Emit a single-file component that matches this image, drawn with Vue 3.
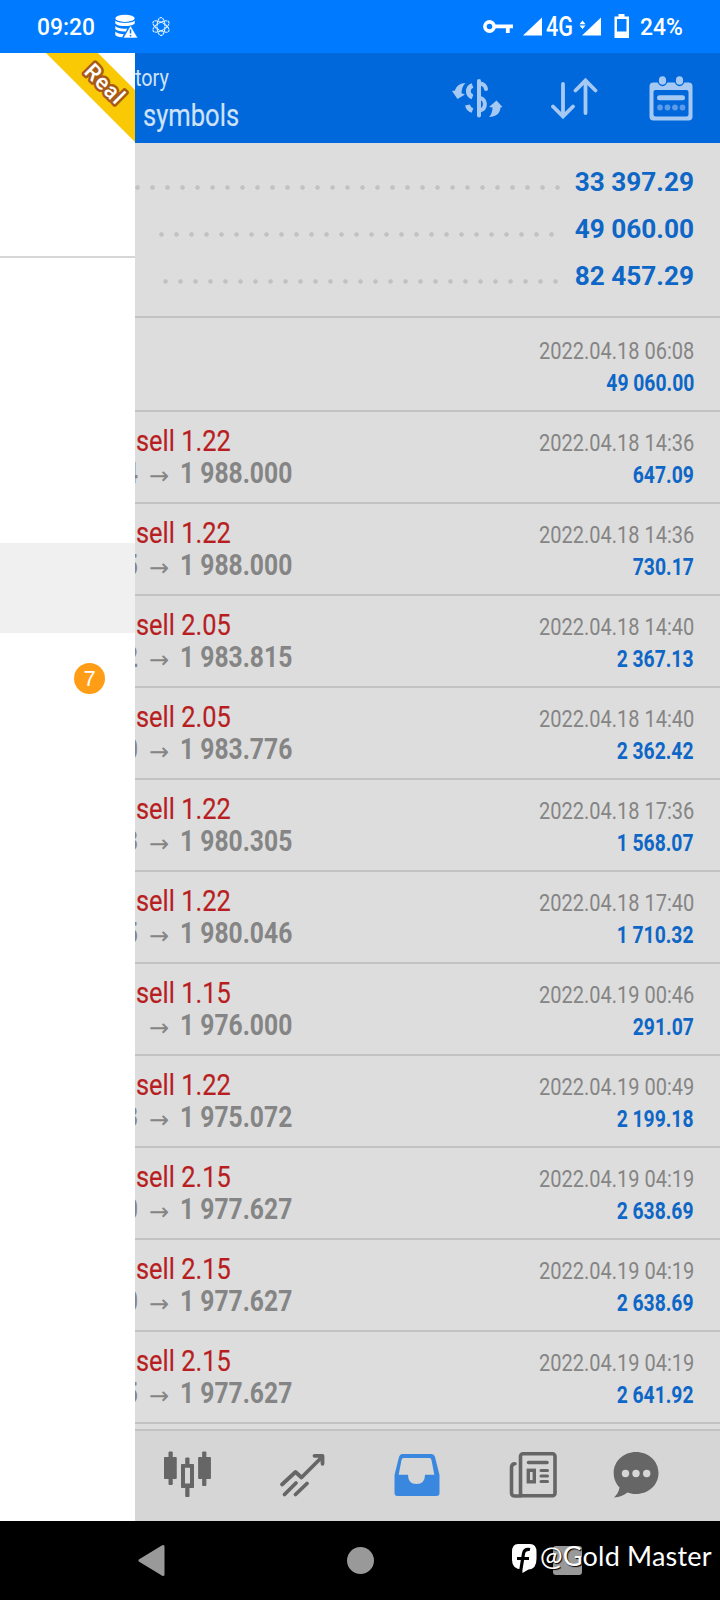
<script setup>
const totals = [
  { value: '33 397.29', cls: 'first' },
  { value: '49 060.00', cls: 'second' },
  { value: '82 457.29', cls: 'third' }
]
const deals = [
  ['1.22', '4', '1 988.000', '2022.04.18 14:36', '647.09'],
  ['1.22', '5', '1 988.000', '2022.04.18 14:36', '730.17'],
  ['2.05', '2', '1 983.815', '2022.04.18 14:40', '2 367.13'],
  ['2.05', '0', '1 983.776', '2022.04.18 14:40', '2 362.42'],
  ['1.22', '3', '1 980.305', '2022.04.18 17:36', '1 568.07'],
  ['1.22', '5', '1 980.046', '2022.04.18 17:40', '1 710.32'],
  ['1.15', '', '1 976.000', '2022.04.19 00:46', '291.07'],
  ['1.22', '3', '1 975.072', '2022.04.19 00:49', '2 199.18'],
  ['2.15', '0', '1 977.627', '2022.04.19 04:19', '2 638.69'],
  ['2.15', '0', '1 977.627', '2022.04.19 04:19', '2 638.69'],
  ['2.15', '5', '1 977.627', '2022.04.19 04:19', '2 641.92']
].map(([volume, open, close, time, profit]) => ({ volume, open, close, time, profit }))
</script>

<template>
  <div class="phone">
    <header class="status">
      <span class="clock">09:20</span>
      <svg class="db" viewBox="112 14 26 25" width="26" height="25">
        <g fill="#fff">
          <ellipse cx="124" cy="18.3" rx="9.7" ry="3.6" />
          <path d="M114.3 20.5c2 3.2 17.4 3.2 19.4 0v3c-2 3.4-17.4 3.4-19.4 0zM114.3 26c2 2.6 8 3 12 2.5l-1.500 2.900c-5 .3-9-.6-10.500-2.400zM114.300 31.500c2 2 5 2.500 8.500 2.500l-1.600 3.200c-4 0-6-1-6.900-2.200z" />
          <path d="M129.500 25.500l7.300 12.500h-14.600z" stroke="#007bff" stroke-width=".6" />
        </g>
        <path d="M129.500 29.500v4M129.500 35v1.600" stroke="#007bff" stroke-width="1.500" />
      </svg>
      <svg class="atom" viewBox="152 16 18 21" width="18" height="21" fill="none" stroke="#e8f4ff" stroke-width="1.100" stroke-dasharray="2.500 .5">
        <ellipse cx="161" cy="26.500" rx="4" ry="9" />
        <ellipse cx="161" cy="26.500" rx="4" ry="9" transform="rotate(60 161 26.500)" />
        <ellipse cx="161" cy="26.500" rx="4" ry="9" transform="rotate(120 161 26.500)" />
      </svg>
      <svg class="key" viewBox="483 19 30 15" width="30" height="15" fill="none" stroke="#fff">
        <circle cx="489.500" cy="26.500" r="4.600" stroke-width="3.600" />
        <path d="M495 26.300h18M507.800 26v7" stroke-width="3.800" />
      </svg>
      <svg class="sig" viewBox="523 17 20 19" width="20" height="19"><path d="M523 35.500L542 17.500v18z" fill="#fff" /></svg>
      <span class="net">4G</span>
      <svg class="sig2" viewBox="579 17 23 19" width="23" height="19" fill="#fff">
        <path d="M582 35.500L601 17.500v18z" />
        <path d="M579.500 24.200l3-3.700 3 3.700zM579.500 25.500l3 3.500 3-3.500z" />
      </svg>
      <svg class="bat" viewBox="613 14 17 25" width="17" height="25">
        <path d="M618.500 14h6v2.500h4.500v21.500h-14.500V16.500h4z" fill="#fff" />
        <path d="M617 19h9.500v12.500H617z" fill="#007bff" />
      </svg>
      <span class="pct">24%</span>
    </header>

    <div class="body">
      <aside class="drawer">
        <div class="account">
          <svg class="ribbon" viewBox="0 0 89 89" width="89" height="89">
            <path d="M0 0H52L89 37V89z" fill="#f9c906" />
            <text x="59" y="38.500" transform="rotate(45 59 31)" text-anchor="middle" class="real">Real</text>
          </svg>
        </div>
        <div class="active"></div>
        <div class="mail"><span class="badge">7</span></div>
      </aside>

      <main class="main">
        <div class="toolbar">
          <div class="titles">
            <div class="sub"><span class="cond">tory</span></div>
            <div class="title"><span class="cond">symbols</span></div>
          </div>
          <svg class="tool" viewBox="452 76 52 42" width="52" height="42" fill="none" stroke="#a5c9f2" stroke-width="4" stroke-linecap="round">
            <path d="M479 80v34.500" />
            <path d="M472.500 84.500c-5.500 2-5.500 9.500 0 11.500M467.500 104c.5 3 2 4.500 5 5.500" stroke-linecap="butt" stroke-width="4.800" />
            <path d="M480 82.500c3.500.5 5.500 2.500 6 5.500M480 97c6.500 1 6.500 11 0 12.500" />
            <path d="M465.500 82c-5 0-9.500 3-10.500 7.500l-3 .5 5.500 8 7.500-4.500-3.500-1.200c0-4 1-7.500 4-10.300zM489 116c7 0 11-3.500 11.500-9.500l2-.5-6-6.500-7.500 6.500 3.500.5c0 4-1 7-3.500 9.500z" fill="#a5c9f2" stroke="none" />
          </svg>
          <svg class="tool" viewBox="550 76 48 42" width="48" height="42" fill="none" stroke="#a5c9f2" stroke-width="3.800" stroke-linecap="round">
            <path d="M563 83v32M553 105.500l10 10 10-10M585.500 112V80M575.500 89.500l10-10 10 10" />
          </svg>
          <svg class="tool" viewBox="648 74 46 47" width="46" height="47">
            <rect x="649.500" y="81.500" width="43" height="38" rx="4" fill="#a5c9f2" />
            <g fill="#a5c9f2" stroke="#0068db" stroke-width="1.300"><ellipse cx="662.500" cy="79.500" rx="4.300" ry="5" /><ellipse cx="679.500" cy="79.500" rx="4.300" ry="5" /></g>
            <rect x="653.500" y="89" width="35" height="26.500" rx="2" fill="#0068db" />
            <path d="M659.500 96.700h23" stroke="#a5c9f2" stroke-width="5" stroke-linecap="round" />
            <g fill="#5b9be8"><circle cx="660" cy="106.500" r="2.900" /><circle cx="667.500" cy="106.500" r="2.900" /><circle cx="675" cy="106.500" r="2.900" /><circle cx="682.500" cy="106.500" r="2.900" /></g>
          </svg>
        </div>

        <section class="totals">
          <div v-for="t in totals" :key="t.value" class="total">
            <div class="dots" :class="t.cls"></div>
            <strong>{{ t.value }}</strong>
          </div>
        </section>

        <section class="deals">
          <div class="deal balance">
            <div></div>
            <div class="right">
              <span class="time">2022.04.18 06:08</span>
              <span class="profit">49 060.00</span>
            </div>
          </div>
          <div v-for="(d, i) in deals" :key="i" class="deal">
            <div class="left">
              <span class="side">sell {{ d.volume }}</span>
              <div class="prices">
                <span class="open">{{ d.open }}</span>
                <span class="arrow">→</span>
                <span class="close">{{ d.close }}</span>
              </div>
            </div>
            <div class="right">
              <span class="time">{{ d.time }}</span>
              <span class="profit">{{ d.profit }}</span>
            </div>
          </div>
        </section>

        <nav class="tabs">
          <svg viewBox="163 1451 50 48" width="50" height="48" fill="#666" stroke="#666" stroke-width="1" stroke-linejoin="round">
            <path d="M169 1452h3.200v5.500h4v21h-4v6H169v-6h-4.500v-21h4.500zM202.700 1452h3.200v5.500h4.500v21h-4.500v7h-3.200v-7h-4v-21h4z" />
            <path d="M185.800 1458h3.200v6.500h4.500v23h-4.500v9h-3.200v-9H181.500v-23h4.300zM184.500 1467.200v16.800h6v-16.800z" fill-rule="evenodd" />
          </svg>
          <svg viewBox="279 1451 48 46" width="48" height="46" fill="none" stroke="#666" stroke-width="3.800" stroke-linecap="round" stroke-linejoin="round">
            <path d="M282 1483.500l13.500-12.500 6 5.500 21-21M314.500 1454.800h8v8M284.500 1493.500l11.500-11.500M295.500 1493.500l11.500-11" />
          </svg>
          <svg viewBox="394 1451 47 46" width="47" height="46">
            <path d="M403 1453h29q3 0 4 3l4.500 18v18q0 3-3 3h-39q-3 0-3-3v-18l4.500-18q1-3 3-3zM404.500 1457q-1.500 0-2 2l-2.800 14.800h9.300q0 9.200 8.500 9.200t8.500-9.200h9.300l-2.800-14.800q-.5-2-2-2z" fill="#3a87e0" fill-rule="evenodd" />
          </svg>
          <svg viewBox="509 1450 48 48" width="48" height="48" fill="none" stroke="#666" stroke-width="3.600" stroke-linecap="round">
            <rect x="520.500" y="1452.800" width="34.500" height="42" rx="2.500" />
            <path d="M515 1462.700q-3.500 0-3.500 4v25q0 3.300 3.500 3.300h6M528.500 1461.500h18.500" />
            <rect x="528.300" y="1469.300" width="6" height="11.500" stroke-width="3.400" />
            <path d="M541 1469.500h6.500M541 1475h6.500M541 1480.500h6.500" stroke-width="3" />
          </svg>
          <svg viewBox="613 1450 47 48" width="47" height="48">
            <path d="M636 1451c12.500 0 22.500 9 22.500 21s-10 21-22.500 21c-4 0-6-.7-8.500-1.500-4 3-8 4.500-13.500 5 3-3 5-6 5.500-10-3.500-4-5.800-8.500-5.800-14.500 0-12 10-21 22.300-21z" fill="#666" />
            <g fill="#d6d6d6"><circle cx="625.500" cy="1472.500" r="3.700" /><circle cx="636" cy="1472.500" r="3.700" /><circle cx="646.700" cy="1472.500" r="3.700" /></g>
          </svg>
        </nav>
      </main>
    </div>

    <footer class="system">
      <svg class="back" viewBox="138 1544 27 33" width="27" height="33"><path d="M140 1560.500l23-14v28z" fill="#999" stroke="#999" stroke-width="3" stroke-linejoin="round" /></svg>
      <span class="home"></span>
      <span class="recent"></span>
      <div class="mark">
        <svg viewBox="511 1543 26 30" width="26" height="30">
          <path d="M518 1544h12q6.500 0 6.500 8v7q0 10-8 10.500l-6 3.500-.5-3.500q-10-.5-10-9.500v-8q0-8 6-8z" fill="#fff" />
          <path d="M530 1549.500q-5.500-1-6.500 4l-3 18.500M517 1558.500h12" fill="none" stroke="#000" stroke-width="3.200" />
        </svg>
        <span class="handle">@Gold Master</span>
      </div>
    </footer>
  </div>
</template>

<style scoped>
.phone { width: 720px; height: 1600px; display: flex; flex-direction: column; overflow: hidden; font-family: Roboto, sans-serif; background: #000; }
.phone svg { display: block; flex: none; }
.status { height: 53px; box-sizing: border-box; display: flex; align-items: center; background: #007bff; color: #fff; white-space: nowrap; padding-left: 37px; }
.clock { font-size: 24px; font-weight: 500; line-height: 54px; width: 58px; transform: scaleX(.95); transform-origin: left; }
.db { margin-left: 18px; }
.atom { margin-left: 13px; }
.key { margin-left: 313px; }
.sig { margin-left: 10px; }
.net { font-size: 27px; font-weight: 500; width: 35px; margin-left: 3px; transform: scaleX(.8); transform-origin: left; }
.sig2 { margin-left: -2px; }
.bat { margin-left: 11px; }
.pct { font-size: 24px; font-weight: 500; margin-left: 10px; transform: scaleX(.95); transform-origin: left; line-height: 54px; }
.body { height: 1468px; display: flex; }
.drawer { width: 135px; flex: none; background: #fff; }
.account { height: 205px; box-sizing: border-box; border-bottom: 2px solid #d6d6d6; display: flex; justify-content: flex-end; }
.real { font: 500 22px Roboto, sans-serif; letter-spacing: 1px; fill: #fff; stroke: #a85b17; stroke-width: 5px; paint-order: stroke; stroke-linejoin: round; }
.active { height: 90px; margin-top: 285px; background: #f0f0f0; }
.mail { height: 90px; display: flex; justify-content: flex-end; align-items: center; padding-right: 30px; }
.badge { width: 31px; height: 31px; border-radius: 50%; background: #ff9e16; color: #fff; font: 22px/31px "Liberation Sans", sans-serif; text-align: center; }
.main { width: 585px; flex: none; background: #ddd; overflow: hidden; display: flex; flex-direction: column; }
.toolbar { height: 90px; flex: none; background: #0068db; display: flex; align-items: center; }
.titles { width: 317px; color: #cfe2f8; height: 90px; white-space: nowrap; }
.cond { display: inline-block; transform: scaleX(.825); transform-origin: left; }
.sub { font-size: 24px; line-height: 30px; margin-top: 10px; }
.title { font-size: 31px; line-height: 40px; margin-top: 3px; padding-left: 8px; -webkit-text-stroke: .2px #cfe2f8; }
.tool + .tool { margin-left: 46px; }
.tool:last-child { margin-left: 50px; }
.totals { height: 175px; flex: none; box-sizing: border-box; padding: 16px 26px 0 0; border-bottom: 2px solid #c2c2c2; }
.total { display: flex; justify-content: space-between; height: 47px; }
.total strong { font-size: 26.200px; line-height: 46px; font-weight: 700; color: #0e66c6; }
.dots { height: 5px; margin-top: 26px; background-image: radial-gradient(circle at 2.500px 2.500px, #c2c2c2 1.900px, transparent 2.600px); background-size: 15px 5px; }
.first { width: 426px; }
.second { margin-left: 24px; width: 395px; }
.third { margin-left: 28px; width: 395px; }
.deals { height: 1113px; flex: none; box-sizing: border-box; overflow: hidden; border-bottom: 2px solid #c2c2c2; }
.deal { height: 92px; box-sizing: border-box; border-bottom: 2px solid #c2c2c2; display: flex; justify-content: space-between; padding: 14px 26px 0 1px; white-space: nowrap; }
.balance { height: 94px; padding-top: 16px; }
.left, .right { display: flex; flex-direction: column; }
.right { align-items: flex-end; }
.side { font-size: 29.500px; line-height: 30px; color: #b81d22; transform: scaleX(.86); transform-origin: left; -webkit-text-stroke: .2px #b81d22; }
.prices { display: flex; line-height: 34px; font-size: 29px; font-weight: 700; color: #858585; }
.open { width: 14px; margin-left: -12px; transform: scaleX(.84); transform-origin: left; }
.arrow { width: 31px; margin-left: 11px; font: 24px/38px "Noto Sans", "DejaVu Sans", sans-serif; }
.close { transform: scaleX(.85); transform-origin: left; }
.time { font-size: 24.400px; line-height: 34px; color: #858585; transform: scaleX(.82); transform-origin: right; }
.profit { font-size: 24px; line-height: 30px; font-weight: 700; color: #0e66c6; transform: scaleX(.805); transform-origin: right; }
.tabs { height: 90px; background: #d6d6d6; flex: none; display: flex; align-items: center; padding: 0 0 2px 28px; box-sizing: border-box; }
.tabs svg:nth-child(2) { margin-left: 66px; }
.tabs svg:nth-child(3) { margin-left: 66px; }
.tabs svg:nth-child(4) { margin-left: 69px; }
.tabs svg:nth-child(5) { margin-left: 56px; }
.system { height: 79px; display: flex; align-items: center; position: relative; padding-left: 138px; box-sizing: border-box; }
.home { width: 27px; height: 27px; border-radius: 50%; background: #999; margin-left: 182px; }
.recent { width: 29px; height: 29px; border-radius: 3px; background: #999; margin-left: 179px; }
.mark { position: absolute; left: 511px; top: 22px; display: flex; color: #fff; white-space: nowrap; }
.handle { font: 27px/26px Lato, sans-serif; letter-spacing: .2px; margin-left: 3px; text-shadow: 1px 1px 1px #000; }
</style>
